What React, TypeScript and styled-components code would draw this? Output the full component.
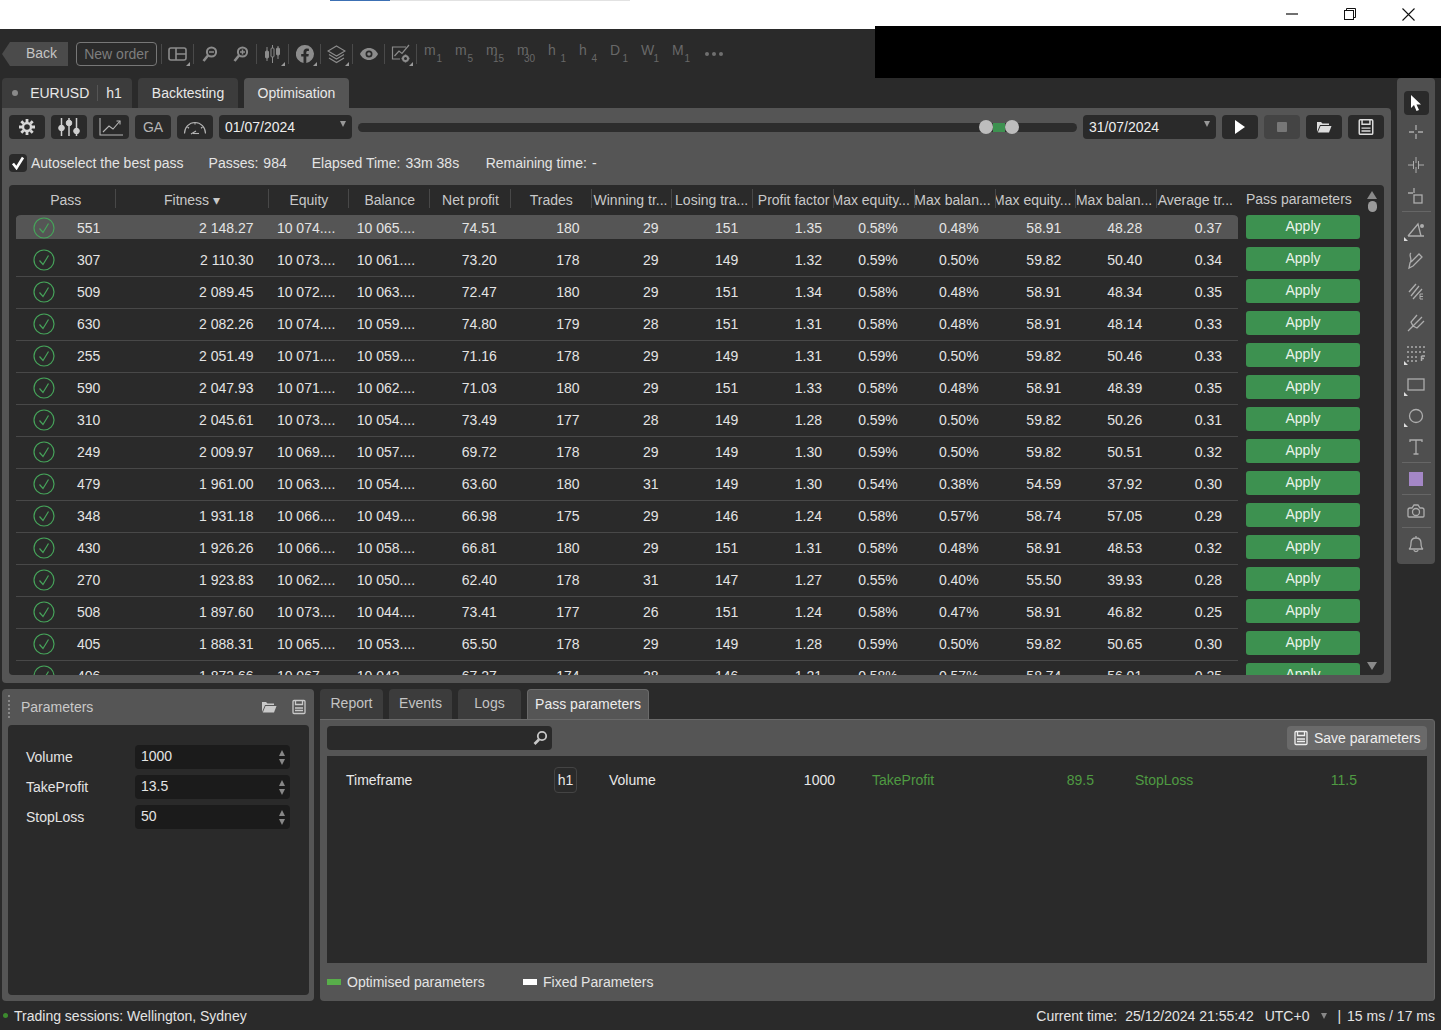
import React, { FC, ReactNode } from "react";
import styled, { createGlobalStyle } from "styled-components";

const panel = "#555555";
const dark = "#2a2a2a";
const darker = "#1b1b1b";
const green = "#3d9150";
const paramGreen = "#4f9a42";

const GlobalStyle = createGlobalStyle`
  html, body {
    margin: 0;
    padding: 0;
    height: 100%;
    overflow: hidden;
    background: ${dark};
  }
  * { box-sizing: border-box; }
  svg { display: block; }
`;

const Page = styled.div`
  position: relative;
  width: 1441px;
  height: 1030px;
  display: flex;
  flex-direction: column;
  background: ${dark};
  color: #e4e4e4;
  font: 14px "Liberation Sans", Arial, sans-serif;
  overflow: hidden;
`;

const TitleBar = styled.div`
  height: 29px;
  background: #fff;
  display: flex;
  justify-content: space-between;
  align-items: flex-start;
  padding: 0 3px 0 330px;
`;

const LoadTrack = styled.div`
  width: 300px;
  height: 1px;
  background: #e2e2e2;
`;

const LoadFill = styled.div`
  width: 60px;
  height: 100%;
  background: #3c70b4;
`;

const WinControls = styled.div`
  display: flex;
  height: 28px;
`;

const WinButton = styled.div`
  width: 58.5px;
  height: 28px;
  display: flex;
  align-items: center;
  justify-content: center;
`;

const Redacted = styled.div`
  position: absolute;
  left: 875px;
  top: 26px;
  width: 566px;
  height: 52px;
  background: #000;
`;

const TopBar = styled.div`
  height: 49px;
  padding: 13px 0 0 2px;
  display: flex;
  align-items: flex-start;
  color: #8c8c8c;
`;

const BackButton = styled.div`
  width: 66px;
  height: 24px;
  background: #4b4b4b;
  color: #c4c4c4;
  clip-path: polygon(0 50%, 8px 0, 100% 0, 100% 100%, 8px 100%);
  padding-left: 24px;
  line-height: 23px;
`;

const NewOrder = styled.div`
  width: 81px;
  height: 24px;
  margin: 0 4px 0 8px;
  border: 1px solid #777;
  border-radius: 4px;
  color: #7d7d7d;
  text-align: center;
  line-height: 23px;
`;

const Divider = styled.div`
  width: 1px;
  height: 20px;
  margin-top: 2px;
  background: #4a4a4a;
`;

const ToolSlot = styled.div<{ $corner?: boolean }>`
  position: relative;
  width: 31px;
  height: 24px;
  display: flex;
  align-items: center;
  justify-content: center;
  &::after {
    content: "";
    display: ${(p) => (p.$corner ? "block" : "none")};
    position: absolute;
    right: 3px;
    bottom: 0;
    border-style: solid;
    border-width: 0 0 4px 4px;
    border-color: transparent transparent #9a9a9a transparent;
  }
`;

const Timeframes = styled.div`
  display: flex;
  margin-left: 7px;
  color: #686868;
`;

const Timeframe = styled.div`
  position: relative;
  width: 31px;
  height: 24px;
  line-height: 17px;
`;

const TimeframeSub = styled.span`
  position: absolute;
  left: 0;
  top: 11px;
  width: 18px;
  text-align: right;
  font-size: 10px;
  line-height: 12px;
`;

const MoreDots = styled.div`
  display: flex;
  gap: 3px;
  margin: 10px 0 0 2px;
`;

const MoreDot = styled.span`
  width: 4px;
  height: 4px;
  border-radius: 50%;
  background: #6f6f6f;
`;

const MainRow = styled.div`
  display: flex;
  gap: 6px;
  padding-left: 2px;
  height: 605px;
`;

const MainColumn = styled.div`
  width: 1389px;
  display: flex;
  flex-direction: column;
`;

const TabRow = styled.div`
  display: flex;
  gap: 6px;
  height: 30px;
  flex-shrink: 0;
`;

const Tab = styled.div<{ $active?: boolean; $w: number }>`
  width: ${(p) => p.$w}px;
  display: flex;
  align-items: center;
  justify-content: center;
  gap: 7px;
  background: ${(p) => (p.$active ? panel : "#3c3c3c")};
  color: #e8e8e8;
  border-radius: 4px 4px 0 0;
`;

const SymbolDot = styled.span`
  width: 6px;
  height: 6px;
  margin-right: 5px;
  border-radius: 50%;
  background: #8a8a8a;
`;

const TabRule = styled.span`
  width: 1px;
  height: 16px;
  margin: 0 1px;
  background: #555;
`;

const MainPanel = styled.div`
  flex: 1;
  min-height: 0;
  background: ${panel};
  border-radius: 0 4px 4px 4px;
  padding: 7px 7px 8px;
  display: flex;
  flex-direction: column;
`;

const Controls = styled.div`
  display: flex;
  align-items: center;
  gap: 6px;
  height: 24px;
  flex-shrink: 0;
`;

const CtrlButton = styled.div<{ $disabled?: boolean }>`
  width: 36px;
  height: 24px;
  border-radius: 4px;
  background: ${(p) => (p.$disabled ? "#444" : dark)};
  color: ${(p) => (p.$disabled ? "#777" : "#b5b5b5")};
  display: flex;
  align-items: center;
  justify-content: center;
  flex-shrink: 0;
`;

const DateField = styled.div`
  position: relative;
  width: 133px;
  height: 24px;
  padding-left: 6px;
  border-radius: 4px;
  background: ${dark};
  color: #eee;
  line-height: 24px;
  flex-shrink: 0;
`;

const Caret = styled.span`
  position: absolute;
  right: 6px;
  top: 6px;
  border-style: solid;
  border-width: 6px 3px 0;
  border-color: #999 transparent transparent;
`;

const Slider = styled.div`
  flex: 1;
  height: 9px;
  border-radius: 5px;
  background: #2d2d2d;
  display: flex;
  align-items: center;
  padding-left: 621px;
`;

const SliderThumb = styled.span`
  width: 14px;
  height: 14px;
  border-radius: 50%;
  background: #bdbdbd;
  flex-shrink: 0;
`;

const SliderFill = styled.span`
  width: 12px;
  height: 9px;
  background: ${green};
  flex-shrink: 0;
`;

const InfoRow = styled.div`
  height: 46px;
  display: flex;
  align-items: center;
  gap: 25px;
  flex-shrink: 0;
  padding-top: 2px;
`;

const AutoSelect = styled.div`
  display: flex;
  align-items: center;
  gap: 4px;
`;

const CheckBox = styled.span`
  width: 18px;
  height: 18px;
  border-radius: 4px;
  background: ${dark};
  display: flex;
  align-items: center;
  justify-content: center;
`;

const Stat = styled.div<{ $w?: number }>`
  display: flex;
  gap: 5px;
  width: ${(p) => (p.$w ? `${p.$w}px` : "auto")};
`;

const Table = styled.div`
  flex: 1;
  min-height: 0;
  display: flex;
  background: ${dark};
  border-radius: 4px;
  padding-left: 7px;
  overflow: hidden;
`;

const TableMain = styled.div`
  width: 1344px;
  display: flex;
  flex-direction: column;
`;

const HeadRow = styled.div`
  display: flex;
  height: 28px;
  flex-shrink: 0;
  color: #c8c8c8;
`;

const Columns = styled.div`
  width: 1222px;
  display: grid;
  grid-template-columns: 99.5px 153px repeat(12, 1fr);
`;

const HeadCell = styled.div<{ $clip?: boolean; $last?: boolean }>`
  display: flex;
  align-items: center;
  justify-content: ${(p) => (p.$clip ? "flex-end" : "center")};
  padding-right: ${(p) => (p.$clip ? "5px" : "0")};
  white-space: nowrap;
  overflow: hidden;
  padding-top: 1px;
  background: ${(p) =>
    p.$last ? "none" : "linear-gradient(#484848, #484848) right 4px / 1px 19px no-repeat"};
  & > span {
    flex-shrink: 0;
  }
`;

const HeadExtra = styled.div`
  margin-left: 8px;
  line-height: 29px;
  white-space: nowrap;
`;

const Row = styled.div`
  display: flex;
  height: 32px;
  flex-shrink: 0;
`;

const RowColumns = styled(Columns)<{ $selected?: boolean }>`
  height: 32px;
  padding: 2px 0 5px;
  border-bottom: 1px solid #484848;
  background: ${(p) => (p.$selected ? "#555" : "transparent")};
  background-clip: content-box;
  border-radius: ${(p) => (p.$selected ? "5px" : "0")};
  border-bottom-color: ${(p) => (p.$selected ? "transparent" : "#484848")};
`;

const PassCell = styled.div`
  display: flex;
  align-items: center;
  gap: 22px;
  padding-left: 17px;
  margin-top: 1px;
`;

const Cell = styled.div<{ $pad?: number }>`
  display: flex;
  align-items: center;
  justify-content: flex-end;
  padding-right: ${(p) => p.$pad ?? 15}px;
  white-space: nowrap;
  margin-top: 1px;
`;

const ApplyButton = styled.div`
  width: 114px;
  height: 24px;
  margin: 2px 0 0 8px;
  border-radius: 3px;
  background: ${green};
  color: #e9f3ea;
  text-align: center;
  line-height: 23px;
`;

const ScrollColumn = styled.div`
  width: 24px;
  display: flex;
  flex-direction: column;
  align-items: center;
  padding: 6px 0 5px;
`;

const ArrowUp = styled.span`
  border-style: solid;
  border-width: 0 5px 8px;
  border-color: transparent transparent #8a8a8a;
`;

const ArrowDown = styled.span`
  margin-top: auto;
  border-style: solid;
  border-width: 8px 5px 0;
  border-color: #8a8a8a transparent transparent;
`;

const ScrollThumb = styled.span`
  width: 9px;
  height: 11px;
  margin-top: 2px;
  border-radius: 5px;
  background: #9a9a9a;
`;

const Rail = styled.div`
  width: 38px;
  height: 486px;
  background: #4f4f4f;
  border-radius: 4px;
  display: flex;
  flex-direction: column;
  align-items: center;
  padding-top: 13px;
  color: #adadad;
`;

const RailSlot = styled.div<{ $active?: boolean; $h?: number; $corner?: boolean }>`
  position: relative;
  width: 25px;
  height: ${(p) => p.$h ?? 31}px;
  flex-shrink: 0;
  display: flex;
  align-items: center;
  justify-content: center;
  background: ${(p) => (p.$active ? dark : "transparent")};
  border-radius: 4px;
  &::after {
    content: "";
    display: ${(p) => (p.$corner ? "block" : "none")};
    position: absolute;
    left: 0;
    bottom: 4px;
    border-style: solid;
    border-width: 4px 0 0 4px;
    border-color: transparent transparent transparent #ddd;
  }
`;

const RailRule = styled.div`
  width: 29px;
  height: 1px;
  background: #666;
  flex-shrink: 0;
`;

const BottomRow = styled.div`
  display: flex;
  gap: 6px;
  margin-top: 6px;
  padding-left: 2px;
  height: 312px;
`;

const ParamsPanel = styled.div`
  position: relative;
  width: 312px;
  background: ${panel};
  border-radius: 4px;
  padding: 0 5px 6px 6px;
  display: flex;
  flex-direction: column;
`;

const ParamsHead = styled.div`
  height: 36px;
  flex-shrink: 0;
  display: flex;
  align-items: center;
  gap: 14px;
  padding: 0 2px 0 13px;
  color: #c9c9c9;
`;

const ParamsTitle = styled.div`
  flex: 1;
`;

const Grip = styled.span`
  position: absolute;
  left: 6px;
  top: 6px;
  width: 3px;
  height: 23px;
  border-left: 2px dotted #888;
`;

const ParamsBody = styled.div`
  flex: 1;
  background: ${dark};
  border-radius: 4px;
  padding: 20px 19px 0 18px;
  display: flex;
  flex-direction: column;
  gap: 6px;
`;

const ParamRow = styled.div`
  display: flex;
  align-items: center;
  justify-content: space-between;
`;

const SpinField = styled.div`
  position: relative;
  width: 155px;
  height: 24px;
  padding-left: 6px;
  border-radius: 4px;
  background: ${darker};
  line-height: 23px;
`;

const SpinArrows = styled.span`
  position: absolute;
  right: 5px;
  top: 5px;
  display: flex;
  flex-direction: column;
  gap: 3px;
  & > i:first-child {
    border-width: 0 3px 6px;
    border-color: transparent transparent #888;
  }
  & > i:last-child {
    border-width: 6px 3px 0;
    border-color: #888 transparent transparent;
  }
`;

const SpinArrow = styled.i`
  display: block;
  border-style: solid;
`;

const ResultColumn = styled.div`
  width: 1115px;
  display: flex;
  flex-direction: column;
`;

const SubTab = styled.div<{ $active?: boolean; $w: number }>`
  width: ${(p) => p.$w}px;
  display: flex;
  align-items: center;
  justify-content: center;
  padding-bottom: 2px;
  background: ${(p) => (p.$active ? panel : "#3c3c3c")};
  color: ${(p) => (p.$active ? "#ececec" : "#c4c4c4")};
  border-radius: 4px 4px 0 0;
  border: solid #6a6a6a;
  border-width: ${(p) => (p.$active ? "1px 1px 0" : "0")};
`;

const ResultPanel = styled.div`
  flex: 1;
  background: ${panel};
  border-top: 1px solid #6a6a6a;
  border-right: 1px solid #666;
  border-radius: 0 4px 4px 4px;
  padding: 6px 7px 0;
  display: flex;
  flex-direction: column;
`;

const SearchRow = styled.div`
  display: flex;
  justify-content: space-between;
  height: 24px;
  flex-shrink: 0;
`;

const SearchField = styled.div`
  width: 225px;
  border-radius: 4px;
  background: ${dark};
  display: flex;
  align-items: center;
  justify-content: flex-end;
  padding-right: 3px;
  color: #c8c8c8;
`;

const SaveButton = styled.div`
  width: 140px;
  border-radius: 4px;
  background: #6a6a6a;
  display: flex;
  align-items: center;
  gap: 5px;
  padding-left: 6px;
  color: #eee;
`;

const ParamGrid = styled.div`
  margin-top: 6px;
  height: 207px;
  flex-shrink: 0;
  background: ${dark};
  padding: 11px 0 0 19px;
  display: grid;
  grid-template-columns: repeat(4, 263px);
  align-content: start;
`;

const ParamItem = styled.div<{ $optimised?: boolean; $tight?: boolean }>`
  display: flex;
  align-items: center;
  justify-content: space-between;
  height: 26px;
  padding-right: ${(p) => (p.$tight ? "37px" : "41px")};
  color: ${(p) => (p.$optimised ? paramGreen : "#e8e8e8")};
`;

const ValueBadge = styled.span`
  width: 23px;
  height: 26px;
  border: 1px solid #444;
  border-radius: 4px;
  text-align: center;
  line-height: 24px;
`;

const Legend = styled.div`
  flex: 1;
  display: flex;
  align-items: center;
`;

const LegendItem = styled.div<{ $w: number }>`
  width: ${(p) => p.$w}px;
  display: flex;
  align-items: center;
  gap: 6px;
`;

const Swatch = styled.span<{ $color: string }>`
  width: 14px;
  height: 6px;
  background: ${(p) => p.$color};
`;

const StatusBar = styled.div`
  flex: 1;
  display: flex;
  align-items: center;
  justify-content: space-between;
  padding: 0 6px 0 3px;
`;

const StatusLeft = styled.div`
  display: flex;
  align-items: center;
  gap: 6px;
`;

const SessionDot = styled.span`
  width: 5px;
  height: 5px;
  border-radius: 50%;
  background: #3c8a2e;
`;

const StatusRight = styled.div`
  display: flex;
  align-items: center;
`;

const StatusText = styled.span<{ $ml?: number }>`
  margin-left: ${(p) => p.$ml ?? 0}px;
  white-space: pre;
`;

const StatusCaret = styled.span`
  margin-left: 12px;
  border-style: solid;
  border-width: 6px 3px 0;
  border-color: #888 transparent transparent;
`;

type IconProps = { w?: number; h?: number; children: ReactNode };

const Ico: FC<IconProps> = ({ w = 20, h = 20, children }) => (
  <svg
    width={w}
    height={h}
    viewBox={`0 0 ${w} ${h}`}
    fill="none"
    stroke="currentColor"
    strokeWidth="1.3"
  >
    {children}
  </svg>
);

const SaveIcon: FC<{ s?: number }> = ({ s = 16 }) => (
  <svg width={s} height={s} viewBox="0 0 16 16" fill="none" stroke="currentColor" strokeWidth="1.3">
    <rect x="2" y="1.5" width="12" height="13" rx="1" />
    <path d="M4.5 1.5v4h7v-4" />
    <path d="M4 9h8M4 11.5h8" />
  </svg>
);

const OpenIcon: FC = () => (
  <svg width="16" height="14" viewBox="0 0 16 14" fill="currentColor">
    <path d="M1 2h4l1.5 1.5H13V5H4L1 12z" />
    <path d="M4.5 6H15.5l-2.5 6.5H1.8z" />
  </svg>
);

const ZoomIcon: FC<{ plus?: boolean }> = ({ plus }) => (
  <svg width="15" height="17" viewBox="0 0 15 17" fill="none" stroke="currentColor">
    <circle cx="9.5" cy="6" r="4.6" strokeWidth="2" />
    <path d="M6 9.5 1.5 15" strokeWidth="2.6" />
    <path d={plus ? "M7 6h5M9.5 3.5v5" : "M7 6h5"} strokeWidth="1.5" />
  </svg>
);

const PassCheck: FC = () => (
  <svg width="22" height="22" viewBox="0 0 22 22" fill="none" stroke="#46a35a" strokeWidth="1.2">
    <circle cx="11" cy="11" r="10" />
    <path d="M6.5 11.5 10 15.5 15.5 6.5" />
  </svg>
);

type PassRow = (string | number)[];

const rows: PassRow[] = [
  ["551", "2 148.27", "10 074....", "10 065....", "74.51", 180, 29, 151, "1.35", "0.58%", "0.48%", "58.91", "48.28", "0.37"],
  ["307", "2 110.30", "10 073....", "10 061....", "73.20", 178, 29, 149, "1.32", "0.59%", "0.50%", "59.82", "50.40", "0.34"],
  ["509", "2 089.45", "10 072....", "10 063....", "72.47", 180, 29, 151, "1.34", "0.58%", "0.48%", "58.91", "48.34", "0.35"],
  ["630", "2 082.26", "10 074....", "10 059....", "74.80", 179, 28, 151, "1.31", "0.58%", "0.48%", "58.91", "48.14", "0.33"],
  ["255", "2 051.49", "10 071....", "10 059....", "71.16", 178, 29, 149, "1.31", "0.59%", "0.50%", "59.82", "50.46", "0.33"],
  ["590", "2 047.93", "10 071....", "10 062....", "71.03", 180, 29, 151, "1.33", "0.58%", "0.48%", "58.91", "48.39", "0.35"],
  ["310", "2 045.61", "10 073....", "10 054....", "73.49", 177, 28, 149, "1.28", "0.59%", "0.50%", "59.82", "50.26", "0.31"],
  ["249", "2 009.97", "10 069....", "10 057....", "69.72", 178, 29, 149, "1.30", "0.59%", "0.50%", "59.82", "50.51", "0.32"],
  ["479", "1 961.00", "10 063....", "10 054....", "63.60", 180, 31, 149, "1.30", "0.54%", "0.38%", "54.59", "37.92", "0.30"],
  ["348", "1 931.18", "10 066....", "10 049....", "66.98", 175, 29, 146, "1.24", "0.58%", "0.57%", "58.74", "57.05", "0.29"],
  ["430", "1 926.26", "10 066....", "10 058....", "66.81", 180, 29, 151, "1.31", "0.58%", "0.48%", "58.91", "48.53", "0.32"],
  ["270", "1 923.83", "10 062....", "10 050....", "62.40", 178, 31, 147, "1.27", "0.55%", "0.40%", "55.50", "39.93", "0.28"],
  ["508", "1 897.60", "10 073....", "10 044....", "73.41", 177, 26, 151, "1.24", "0.58%", "0.47%", "58.91", "46.82", "0.25"],
  ["405", "1 888.31", "10 065....", "10 053....", "65.50", 178, 29, 149, "1.28", "0.59%", "0.50%", "59.82", "50.65", "0.30"],
  ["406", "1 872.66", "10 067....", "10 042....", "67.27", 174, 28, 146, "1.21", "0.58%", "0.57%", "58.74", "56.01", "0.25"],
];

const heads: { label: string; clip?: boolean }[] = [
  { label: "Pass" },
  { label: "Fitness ▾" },
  { label: "Equity" },
  { label: "Balance" },
  { label: "Net profit" },
  { label: "Trades" },
  { label: "Winning tr...", clip: true },
  { label: "Losing tra...", clip: true },
  { label: "Profit factor" },
  { label: "Max equity...", clip: true },
  { label: "Max balan...", clip: true },
  { label: "Max equity...", clip: true },
  { label: "Max balan...", clip: true },
  { label: "Average tr...", clip: true },
];

const cellPads = [15, 14, 15, 14, 12, 14, 15, 12, 17, 17, 15, 15, 16];

const timeframes = [
  ["m", "1"],
  ["m", "5"],
  ["m", "15"],
  ["m", "30"],
  ["h", "1"],
  ["h", "4"],
  ["D", "1"],
  ["W", "1"],
  ["M", "1"],
];

const params = [
  ["Volume", "1000"],
  ["TakeProfit", "13.5"],
  ["StopLoss", "50"],
];

const WindowControls: FC = () => (
  <WinControls>
    <WinButton>
      <svg width="12" height="12" viewBox="0 0 12 12" stroke="#111" strokeWidth="1.2">
        <path d="M0 6h12" />
      </svg>
    </WinButton>
    <WinButton>
      <svg width="12" height="12" viewBox="0 0 12 12" fill="none" stroke="#111">
        <rect x="0.5" y="2.5" width="9" height="9" />
        <path d="M2.5 2.5v-2h9v9h-2" />
      </svg>
    </WinButton>
    <WinButton>
      <svg width="13" height="13" viewBox="0 0 13 13" stroke="#111" strokeWidth="1.1">
        <path d="M.5.5l12 12M12.5.5l-12 12" />
      </svg>
    </WinButton>
  </WinControls>
);

const TopToolbar: FC = () => (
  <TopBar>
    <BackButton>Back</BackButton>
    <NewOrder>New order</NewOrder>
    <Divider />
    <ToolSlot $corner>
      <svg width="19" height="14" viewBox="0 0 19 14" fill="none" stroke="currentColor" strokeWidth="1.6">
        <rect x="1" y="1" width="17" height="12" rx="2" />
        <path d="M8 1v12M8 7h10" />
      </svg>
    </ToolSlot>
    <Divider />
    <ToolSlot>
      <ZoomIcon />
    </ToolSlot>
    <ToolSlot>
      <ZoomIcon plus />
    </ToolSlot>
    <Divider />
    <ToolSlot $corner>
      <svg width="17" height="18" viewBox="0 0 17 18" fill="currentColor" stroke="currentColor">
        <path d="M3 2v14M8.500 0v18M14 1v13" strokeWidth="1" />
        <rect x="1.500" y="6" width="3" height="7" rx="1" />
        <rect x="7" y="3" width="3" height="9" rx="1" fill="#2a2a2a" />
        <rect x="12.500" y="3" width="3" height="7" rx="1" />
      </svg>
    </ToolSlot>
    <Divider />
    <ToolSlot $corner>
      <svg width="18" height="18" viewBox="0 0 18 18" fill="currentColor">
        <path d="M9 0a9 9 0 0 0-1.500 17.900V11.500H5.200V9h2.300V7c0-2.300 1.400-3.500 3.400-3.500l2 .2v2.200h-1.200c-1.100 0-1.400.7-1.400 1.400V9h2.500l-.4 2.500h-2.100v6.400A9 9 0 0 0 9 0z" />
      </svg>
    </ToolSlot>
    <Divider />
    <ToolSlot $corner>
      <svg width="19" height="19" viewBox="0 0 19 19" fill="none" stroke="currentColor" strokeWidth="1.2">
        <path d="M9.500 1 18 6l-8.500 5L1 6z" />
        <path d="M2 9.500l7.500 4.500L17 9.500" />
        <path d="M2 13l7.500 4.500L17 13" />
      </svg>
    </ToolSlot>
    <Divider />
    <ToolSlot>
      <svg width="18" height="12" viewBox="0 0 18 12" fill="currentColor">
        <path fillRule="evenodd" d="M9 0c4 0 7.500 2.600 9 6-1.500 3.400-5 6-9 6S1.500 9.400 0 6c1.500-3.400 5-6 9-6zm0 2.500a3.500 3.500 0 1 0 0 7 3.500 3.500 0 0 0 0-7z" />
        <circle cx="9" cy="6" r="1.800" />
      </svg>
    </ToolSlot>
    <Divider />
    <ToolSlot $corner>
      <svg width="20" height="20" viewBox="0 0 20 20" fill="none" stroke="currentColor" strokeWidth="1.2">
        <path d="M9 15H1.500V3H15" />
        <path d="M3.500 12 8 7l3 2.500L18 1" />
        <circle cx="14.500" cy="14.500" r="2.500" strokeWidth="2" />
        <path d="M14.500 10.500v1.500M14.500 17v1.500M10.500 14.500H12M17 14.500h1.500" strokeWidth="1.600" />
      </svg>
    </ToolSlot>
    <Divider />
    <Timeframes>
      {timeframes.map(([unit, n]) => (
        <Timeframe key={unit + n}>
          {unit}
          <TimeframeSub>{n}</TimeframeSub>
        </Timeframe>
      ))}
      <MoreDots>
        <MoreDot />
        <MoreDot />
        <MoreDot />
      </MoreDots>
    </Timeframes>
  </TopBar>
);

const ControlBar: FC = () => (
  <Controls>
    <CtrlButton>
      <svg width="18" height="18" viewBox="0 0 18 18" fill="none" stroke="#d8d8d8">
        <circle cx="9" cy="9" r="4" strokeWidth="2.400" />
        <path
          d="M9 1v3M9 14v3M1 9h3M14 9h3M3.300 3.300l2.200 2.200M12.500 12.500l2.200 2.200M14.700 3.300l-2.200 2.200M5.500 12.500l-2.200 2.200"
          strokeWidth="2.800"
        />
      </svg>
    </CtrlButton>
    <CtrlButton>
      <svg width="22" height="20" viewBox="0 0 22 20" fill="#d0d0d0" stroke="#d0d0d0">
        <path d="M3.500 1v18M11 1v18M18.500 1v18" strokeWidth="1.500" />
        <circle cx="3.500" cy="11" r="2.800" />
        <circle cx="11" cy="6" r="2.800" />
        <circle cx="18.500" cy="14" r="2.800" />
      </svg>
    </CtrlButton>
    <CtrlButton>
      <svg width="24" height="18" viewBox="0 0 24 18" fill="none" stroke="currentColor" strokeWidth="1.100">
        <path d="M1 0v17h23" />
        <path d="M4 14l6-6 4 3 7-8" />
        <path d="M17.500 3H21v3.500" />
      </svg>
    </CtrlButton>
    <CtrlButton>GA</CtrlButton>
    <CtrlButton>
      <svg width="24" height="16" viewBox="0 0 24 16" fill="none" stroke="currentColor" strokeWidth="1.100">
        <path d="M1.500 14.500a10.500 11 0 0 1 21 0" />
        <path d="M4.500 8l1.500 1.200M12 3.500v2M19.500 8 18 9.200M8 15l5-3" />
        <path d="M10 14.500h6" />
      </svg>
    </CtrlButton>
    <DateField>
      01/07/2024
      <Caret />
    </DateField>
    <Slider>
      <SliderThumb />
      <SliderFill />
      <SliderThumb />
    </Slider>
    <DateField>
      31/07/2024
      <Caret />
    </DateField>
    <CtrlButton>
      <svg width="12" height="14" viewBox="0 0 12 14" fill="#fff">
        <path d="M1 0l10 7-10 7z" />
      </svg>
    </CtrlButton>
    <CtrlButton $disabled>
      <svg width="10" height="10" viewBox="0 0 10 10" fill="currentColor">
        <rect width="10" height="10" rx="1" />
      </svg>
    </CtrlButton>
    <CtrlButton style={{ color: "#ddd" }}>
      <OpenIcon />
    </CtrlButton>
    <CtrlButton style={{ color: "#ddd" }}>
      <SaveIcon s={18} />
    </CtrlButton>
  </Controls>
);

const PassTable: FC = () => (
  <Table>
    <TableMain>
      <HeadRow>
        <Columns>
          {heads.map((h, i) => (
            <HeadCell key={i} $clip={h.clip} $last={i === heads.length - 1}>
              <span>{h.label}</span>
            </HeadCell>
          ))}
        </Columns>
        <HeadExtra>Pass parameters</HeadExtra>
      </HeadRow>
      {rows.map((r, i) => (
        <Row key={String(r[0])}>
          <RowColumns $selected={i === 0}>
            <PassCell>
              <PassCheck />
              {r[0]}
            </PassCell>
            {r.slice(1).map((v, j) => (
              <Cell key={j} $pad={cellPads[j]}>
                {v}
              </Cell>
            ))}
          </RowColumns>
          <ApplyButton>Apply</ApplyButton>
        </Row>
      ))}
    </TableMain>
    <ScrollColumn>
      <ArrowUp />
      <ScrollThumb />
      <ArrowDown />
    </ScrollColumn>
  </Table>
);

const DrawingRail: FC = () => (
  <Rail>
    <RailSlot $active $h={24}>
      <svg width="14" height="16" viewBox="0 0 14 16" fill="#fff">
        <path d="M2 0v13l3-3 2.500 6 2.500-1-2.500-5.500H12z" />
      </svg>
    </RailSlot>
    <RailSlot $h={34}>
      <Ico w={16} h={16}>
        <path d="M8 1v5M8 10v5M1 8h5M10 8h5" />
      </Ico>
    </RailSlot>
    <RailSlot>
      <Ico w={18} h={18}>
        <path d="M9 1v6M9 11v6M1 9h6M11 9h6M6.500 5v8M11.500 5v8" strokeWidth="1" />
      </Ico>
    </RailSlot>
    <RailSlot>
      <Ico w={16} h={16}>
        <path d="M6 0v5M0 5h5" />
        <rect x="6" y="7" width="8" height="8" />
      </Ico>
    </RailSlot>
    <RailRule />
    <RailSlot $h={33} $corner>
      <Ico w={20} h={16}>
        <path d="M2 15h16M2 15 12 3l3 12" />
        <circle cx="16" cy="5" r="2" fill="currentColor" stroke="none" />
      </Ico>
    </RailSlot>
    <RailSlot>
      <Ico w={18} h={18}>
        <path d="M4 1C1 3 6 7 3 11l-1 5 4-2 9-9-3-3-8 8" />
      </Ico>
    </RailSlot>
    <RailSlot>
      <Ico w={18} h={18}>
        <path d="M2 9l7-8M4 13l8-10M6 16l9-10" />
        <path d="M13 11h3M13 13.500h3M13 16h3M13 11v5" strokeWidth="1" />
      </Ico>
    </RailSlot>
    <RailSlot>
      <Ico w={18} h={18}>
        <path d="M1 17l5-5M6 12 4 8l6-7M6 12l4 2 7-7M6 12l9-9" />
      </Ico>
    </RailSlot>
    <RailSlot $corner>
      <Ico w={20} h={16}>
        <path d="M1 1h18M1 6h18M1 11h12M1 15h12" strokeDasharray="2 2" />
        <path d="M15.500 10v5M15.500 10H19M15.500 12.500H18" strokeWidth="1.500" />
      </Ico>
    </RailSlot>
    <RailSlot $corner>
      <Ico w={18} h={14}>
        <rect x="1" y="1" width="16" height="11" />
      </Ico>
    </RailSlot>
    <RailSlot $corner>
      <Ico w={16} h={16}>
        <circle cx="8" cy="8" r="6.500" />
      </Ico>
    </RailSlot>
    <RailSlot>
      <Ico w={14} h={16}>
        <path d="M1 3V1h12v2M7 1v14M4.500 15h5" />
      </Ico>
    </RailSlot>
    <RailRule />
    <RailSlot>
      <svg width="14" height="14" viewBox="0 0 14 14">
        <rect width="14" height="14" fill="#a487c6" />
      </svg>
    </RailSlot>
    <RailRule />
    <RailSlot $h={32}>
      <Ico w={18} h={14}>
        <path d="M1 12V6c0-1 1-2 2-2h2l2-3h4l2 3h2c1 0 2 1 2 2v6c0 .500-.500 1-1 1H2c-.500 0-1-.500-1-1z" />
        <circle cx="9" cy="8" r="3.500" />
      </Ico>
    </RailSlot>
    <RailRule />
    <RailSlot>
      <Ico w={16} h={18}>
        <path d="M1 14c2-1 2-3 2-6 0-3 2-5 5-5s5 2 5 5c0 3 0 5 2 6zM8 1v2M6 15c0 2 4 2 4 0" />
      </Ico>
    </RailSlot>
  </Rail>
);

const ParametersPanel: FC = () => (
  <ParamsPanel>
    <Grip />
    <ParamsHead>
      <ParamsTitle>Parameters</ParamsTitle>
      <OpenIcon />
      <SaveIcon />
    </ParamsHead>
    <ParamsBody>
      {params.map(([label, value]) => (
        <ParamRow key={label}>
          <span>{label}</span>
          <SpinField>
            {value}
            <SpinArrows>
              <SpinArrow />
              <SpinArrow />
            </SpinArrows>
          </SpinField>
        </ParamRow>
      ))}
    </ParamsBody>
  </ParamsPanel>
);

const PassParameters: FC = () => (
  <ResultColumn>
    <TabRow>
      <SubTab $w={63}>Report</SubTab>
      <SubTab $w={63}>Events</SubTab>
      <SubTab $w={63}>Logs</SubTab>
      <SubTab $w={122} $active>
        Pass parameters
      </SubTab>
    </TabRow>
    <ResultPanel>
      <SearchRow>
        <SearchField>
          <svg width="18" height="18" viewBox="0 0 18 18" fill="none" stroke="currentColor">
            <circle cx="11" cy="7" r="4.200" strokeWidth="1.800" />
            <path d="M8 10.500 3.500 15" strokeWidth="2.600" />
          </svg>
        </SearchField>
        <SaveButton>
          <SaveIcon />
          Save parameters
        </SaveButton>
      </SearchRow>
      <ParamGrid>
        <ParamItem $tight style={{ paddingRight: 32 }}>
          Timeframe
          <ValueBadge>h1</ValueBadge>
        </ParamItem>
        <ParamItem $tight>
          Volume
          <span>1000</span>
        </ParamItem>
        <ParamItem $optimised>
          TakeProfit
          <span>89.5</span>
        </ParamItem>
        <ParamItem $optimised>
          StopLoss
          <span>11.5</span>
        </ParamItem>
      </ParamGrid>
      <Legend>
        <LegendItem $w={196}>
          <Swatch $color="#58ae4a" />
          Optimised parameters
        </LegendItem>
        <LegendItem $w={200}>
          <Swatch $color="#fff" />
          Fixed Parameters
        </LegendItem>
      </Legend>
    </ResultPanel>
  </ResultColumn>
);

export default function App() {
  return (
    <Page>
      <GlobalStyle />
      <TitleBar>
        <LoadTrack>
          <LoadFill />
        </LoadTrack>
        <WindowControls />
      </TitleBar>
      <Redacted />
      <TopToolbar />
      <MainRow>
        <MainColumn>
          <TabRow>
            <Tab $w={130}>
              <SymbolDot />
              EURUSD
              <TabRule />
              h1
            </Tab>
            <Tab $w={100}>Backtesting</Tab>
            <Tab $w={105} $active>
              Optimisation
            </Tab>
          </TabRow>
          <MainPanel>
            <ControlBar />
            <InfoRow>
              <AutoSelect>
                <CheckBox>
                  <svg width="14" height="14" viewBox="0 0 14 14" fill="none" stroke="#fff" strokeWidth="2.600">
                    <path d="M2 7.500 5.500 12 12 1.500" />
                  </svg>
                </CheckBox>
                Autoselect the best pass
              </AutoSelect>
              <Stat>
                <span>Passes:</span>
                <span>984</span>
              </Stat>
              <Stat $w={149}>
                <span>Elapsed Time:</span>
                <span>33m 38s</span>
              </Stat>
              <Stat>
                <span>Remaining time:</span>
                <span>-</span>
              </Stat>
            </InfoRow>
            <PassTable />
          </MainPanel>
        </MainColumn>
        <DrawingRail />
      </MainRow>
      <BottomRow>
        <ParametersPanel />
        <PassParameters />
      </BottomRow>
      <StatusBar>
        <StatusLeft>
          <SessionDot />
          Trading sessions: Wellington, Sydney
        </StatusLeft>
        <StatusRight>
          <StatusText>Current time:</StatusText>
          <StatusText $ml={8}>25/12/2024 21:55:42</StatusText>
          <StatusText $ml={11}>UTC+0</StatusText>
          <StatusCaret />
          <StatusText $ml={10}>|</StatusText>
          <StatusText $ml={6}>15 ms / 17 ms</StatusText>
        </StatusRight>
      </StatusBar>
    </Page>
  );
}
